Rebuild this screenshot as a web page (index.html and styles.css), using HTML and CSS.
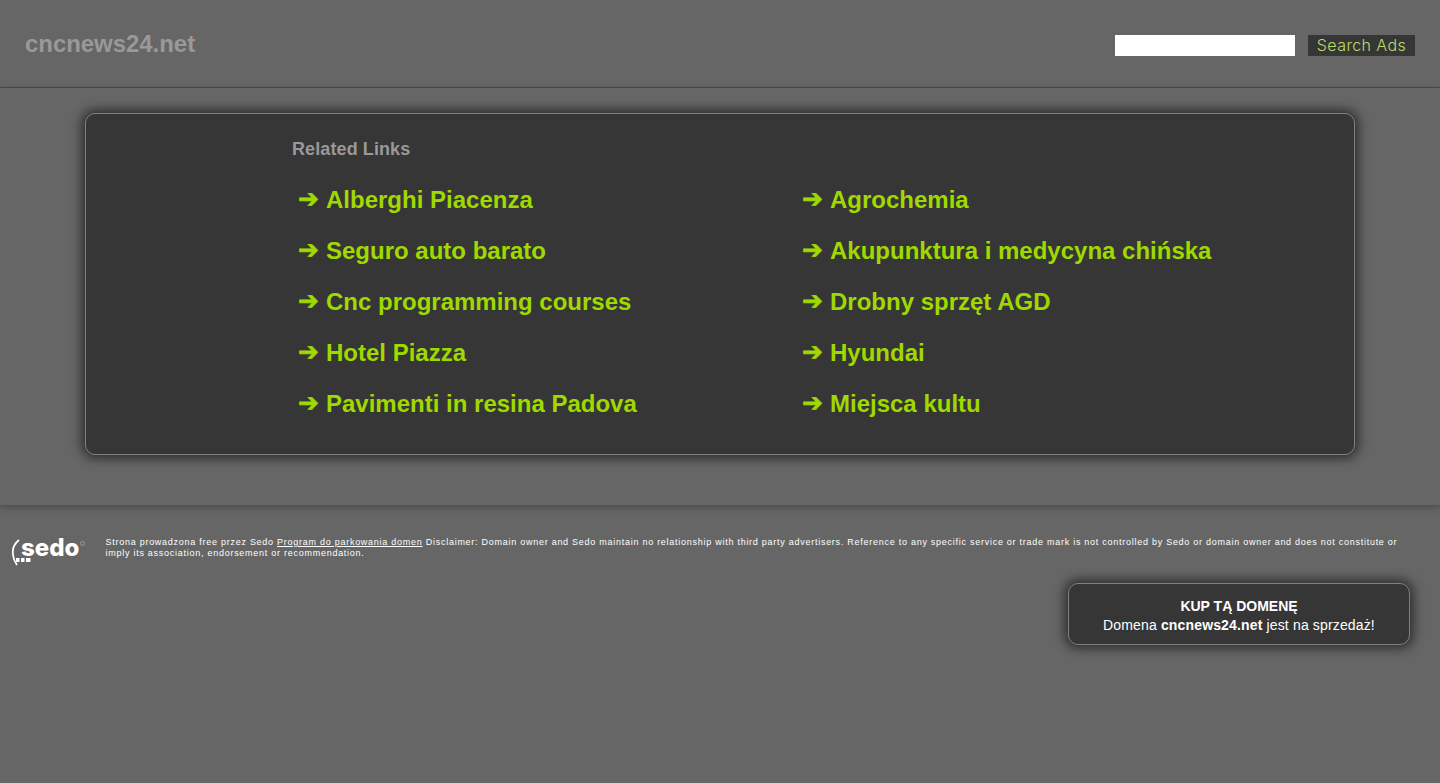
FILE: index.html
```html
<!DOCTYPE html>
<html lang="en">
<head>
  <meta charset="UTF-8" />
  <title>cncnews24.net</title>
  <link rel="stylesheet" href="styles.css">
</head>
<body>

<div class="header">
  <a class="site-name" href="#">cncnews24.net</a>
  <form class="search">
    <input class="search-input" type="text" />
    <button class="search-btn" type="button">Search Ads</button>
  </form>
</div>

<div class="main">
  <div class="panel">
    <h2 class="panel-title">Related Links</h2>
    <div class="links">
      <a class="link" href="#"><span class="arrow">➔</span>Alberghi Piacenza</a>
      <a class="link" href="#"><span class="arrow">➔</span>Agrochemia</a>
      <a class="link" href="#"><span class="arrow">➔</span>Seguro auto barato</a>
      <a class="link" href="#"><span class="arrow">➔</span>Akupunktura i medycyna chińska</a>
      <a class="link" href="#"><span class="arrow">➔</span>Cnc programming courses</a>
      <a class="link" href="#"><span class="arrow">➔</span>Drobny sprzęt AGD</a>
      <a class="link" href="#"><span class="arrow">➔</span>Hotel Piazza</a>
      <a class="link" href="#"><span class="arrow">➔</span>Hyundai</a>
      <a class="link" href="#"><span class="arrow">➔</span>Pavimenti in resina Padova</a>
      <a class="link" href="#"><span class="arrow">➔</span>Miejsca kultu</a>
    </div>
  </div>
</div>

<div class="footer">
  <div class="imprint">
    <div class="logo">
      <svg class="logo-mark" width="22" height="32" viewBox="0 0 22 32">
        <path d="M7 4 C2 8 0 13 1 19 Q1.5 24 5 29" fill="none" stroke="#fff" stroke-width="1.8" />
        <rect x="4" y="22" width="3.5" height="4" fill="#fff" />
        <rect x="9" y="22" width="3.5" height="4" fill="#fff" />
        <rect x="14" y="22" width="4.5" height="4" fill="#fff" />
      </svg>
      <span class="logo-text">sedo</span>
      <span class="logo-reg"></span>
    </div>
    <p class="disclaimer">Strona prowadzona free przez Sedo <a href="#">Program do parkowania domen</a> Disclaimer: Domain owner and Sedo maintain no relationship with third party advertisers. Reference to any specific service or trade mark is not controlled by Sedo or domain owner and does not constitute or imply its association, endorsement or recommendation.</p>
  </div>
  <div class="sale-row">
    <div class="sale">
      <strong>KUP TĄ DOMENĘ</strong><br>
      <span class="sale-line">Domena <strong>cncnews24.net</strong> jest na sprzedaż!</span>
    </div>
  </div>
</div>

</body>
</html>
```

FILE: styles.css
```css
body {
  margin: 0;
  background: #666;
  font-family: "Liberation Sans", Arial, sans-serif;
  height: 783px;
  overflow: hidden;
}

a {
  text-decoration: none;
}

.header {
  height: 87px;
  border-bottom: 1px solid #4d4d4d;
  display: flex;
  justify-content: space-between;
  align-items: flex-start;
  padding: 0 25px;
}

.site-name {
  margin-top: 30px;
  font-size: 24px;
  line-height: 28px;
  font-weight: bold;
  letter-spacing: -0.05px;
  color: #999;
}

.search {
  display: flex;
  margin: 35px 0 0;
}

.search-input {
  width: 180px;
  height: 21px;
  padding: 0;
  border: none;
  background: #fff;
  margin-right: 13px;
}

.search-btn {
  width: 107px;
  height: 21px;
  padding: 0 0 2px;
  border: none;
  background: #363636;
  color: #bcdc6a;
  font-family: Inter, sans-serif;
  font-weight: 300;
  font-size: 16px;
  letter-spacing: 0.4px;
}

.main {
  height: 392px;
  padding: 25px 85px 0;
  box-shadow: 0 2px 7px rgba(0, 0, 0, 0.3);
}

.panel {
  box-sizing: border-box;
  height: 342px;
  padding: 24px 0 0 206px;
  background: #363636;
  border: 1px solid #808080;
  border-radius: 10px;
  box-shadow: 0 0 12px 3px rgba(0, 0, 0, 0.6);
}

.panel-title {
  margin: 0;
  font-size: 18px;
  line-height: 22px;
  font-weight: bold;
  letter-spacing: 0.1px;
  color: #999;
}

.links {
  display: grid;
  grid-template-columns: 504px 1fr;
  grid-auto-rows: 51px;
  margin-top: 14px;
  padding-left: 6px;
}

.link {
  font-size: 24px;
  line-height: 51px;
  font-weight: bold;
  color: #a0d900;
  white-space: nowrap;
}

.arrow {
  display: inline-block;
  width: 28px;
  font-family: "DejaVu Sans", sans-serif;
  font-size: 25px;
  font-weight: bold;
  line-height: 1;
  vertical-align: 1px;
  -webkit-text-stroke: 0.6px #a0d900;
}

.footer {
  padding-top: 31px;
}

.imprint {
  display: flex;
  align-items: flex-start;
  padding: 0 30px 0 12px;
}

.logo {
  flex: none;
  width: 93.5px;
  height: 34px;
  position: relative;
}

.logo-mark {
  position: absolute;
  left: 0;
  top: 0;
}

.logo-text {
  position: absolute;
  left: 9px;
  top: -5px;
  font-family: Inter, sans-serif;
  font-size: 24px;
  line-height: 34px;
  font-weight: 800;
  color: #fff;
}

.logo-reg {
  position: absolute;
  left: 68px;
  top: 5px;
  width: 3px;
  height: 3px;
  border: 1px solid #999;
  border-radius: 50%;
}

.disclaimer {
  margin: 1px 0 0;
  font-size: 9px;
  line-height: 11px;
  letter-spacing: 0.735px;
  color: #fff;
}

.disclaimer a {
  color: #fff;
  text-decoration: underline;
}

.sale-row {
  display: flex;
  justify-content: flex-end;
  padding: 13px 30px 0 0;
}

.sale {
  box-sizing: border-box;
  width: 342px;
  height: 62px;
  padding-top: 13px;
  background: #363636;
  border: 1px solid #808080;
  border-radius: 10px;
  box-shadow: 0 0 12px 3px rgba(0, 0, 0, 0.6);
  text-align: center;
  font-size: 14px;
  line-height: 19px;
  color: #fff;
}

.sale-line {
  letter-spacing: 0.15px;
}
```
